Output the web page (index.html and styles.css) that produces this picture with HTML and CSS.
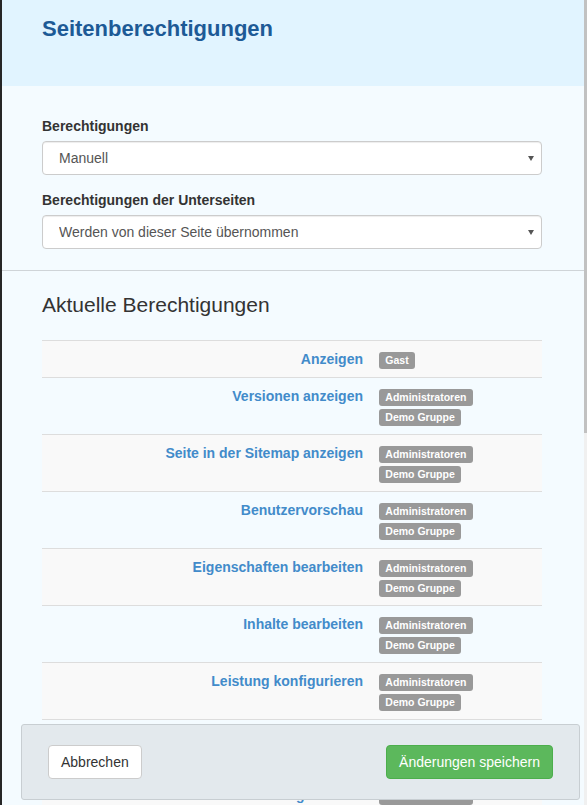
FILE: index.html
```html
<!DOCTYPE html>
<html lang="de">
<head>
<meta charset="utf-8">
<title>Seitenberechtigungen</title>
<link rel="stylesheet" href="styles.css">
</head>
<body>
<div class="page">
  <header class="head">
    <h2 class="title">Seitenberechtigungen</h2>
  </header>

  <section class="settings">
    <div class="group">
      <label class="lbl">Berechtigungen</label>
      <div class="select-wrap"><select class="ctl"><option>Manuell</option></select></div>
    </div>
    <div class="group last">
      <label class="lbl">Berechtigungen der Unterseiten</label>
      <div class="select-wrap"><select class="ctl"><option>Werden von dieser Seite übernommen</option></select></div>
    </div>
  </section>

  <section class="current">
    <h3 class="subtitle">Aktuelle Berechtigungen</h3>
    <table class="perm">
      <tbody>
        <tr><td class="name"><a href="#">Anzeigen</a></td><td class="who"><span class="badge">Gast</span></td></tr>
        <tr><td class="name"><a href="#">Versionen anzeigen</a></td><td class="who"><span class="badge">Administratoren</span><br><span class="badge">Demo Gruppe</span></td></tr>
        <tr><td class="name"><a href="#">Seite in der Sitemap anzeigen</a></td><td class="who"><span class="badge">Administratoren</span><br><span class="badge">Demo Gruppe</span></td></tr>
        <tr><td class="name"><a href="#">Benutzervorschau</a></td><td class="who"><span class="badge">Administratoren</span><br><span class="badge">Demo Gruppe</span></td></tr>
        <tr><td class="name"><a href="#">Eigenschaften bearbeiten</a></td><td class="who"><span class="badge">Administratoren</span><br><span class="badge">Demo Gruppe</span></td></tr>
        <tr><td class="name"><a href="#">Inhalte bearbeiten</a></td><td class="who"><span class="badge">Administratoren</span><br><span class="badge">Demo Gruppe</span></td></tr>
        <tr><td class="name"><a href="#">Leistung konfigurieren</a></td><td class="who"><span class="badge">Administratoren</span><br><span class="badge">Demo Gruppe</span></td></tr>
        <tr><td class="name"><a href="#">Design ändern</a></td><td class="who"><span class="badge">Administratoren</span><br><span class="badge">Demo Gruppe</span></td></tr>
        <tr><td class="name"><a href="#">Seitenvorlage ändern</a></td><td class="who"><span class="badge">Administratoren</span><br><span class="badge">Demo Gruppe</span></td></tr>
        <tr><td class="name"><a href="#">Seitentyp ändern</a></td><td class="who"><span class="badge">Administratoren</span><br><span class="badge">Demo Gruppe</span></td></tr>
        <tr><td class="name"><a href="#">Berechtigungen bearbeiten</a></td><td class="who"><span class="badge">Administratoren</span><br><span class="badge">Demo Gruppe</span></td></tr>
        <tr><td class="name"><a href="#">Seite löschen</a></td><td class="who"><span class="badge">Administratoren</span><br><span class="badge">Demo Gruppe</span></td></tr>
        <tr><td class="name"><a href="#">Versionen löschen</a></td><td class="who"><span class="badge">Administratoren</span><br><span class="badge">Demo Gruppe</span></td></tr>
        <tr><td class="name"><a href="#">Änderungen genehmigen</a></td><td class="who"><span class="badge">Administratoren</span><br><span class="badge">Demo Gruppe</span></td></tr>
        <tr><td class="name"><a href="#">Unterseite hinzufügen</a></td><td class="who"><span class="badge">Administratoren</span><br><span class="badge">Demo Gruppe</span></td></tr>
        <tr><td class="name"><a href="#">Verschieben oder kopieren</a></td><td class="who"><span class="badge">Administratoren</span><br><span class="badge">Demo Gruppe</span></td></tr>
        <tr><td class="name"><a href="#">Gastzugang planen</a></td><td class="who"><span class="badge">Administratoren</span><br><span class="badge">Demo Gruppe</span></td></tr>
        <tr><td class="name"><a href="#">Mehrsprachige Einstellungen</a></td><td class="who"><span class="badge">Administratoren</span><br><span class="badge">Demo Gruppe</span></td></tr>
      </tbody>
    </table>
  </section>
</div>

<div class="scrollbar" aria-hidden="true"><div class="scrollbar-thumb"></div></div>

<footer class="actions">
  <button class="btn btn-default" type="button">Abbrechen</button>
  <button class="btn btn-primary" type="button">Änderungen speichern</button>
</footer>
</body>
</html>
```

FILE: styles.css
```css
html {
  background: #f4fbff;
  scrollbar-width: none;
}

html::-webkit-scrollbar {
  display: none;
}

body {
  margin: 0;
  padding-right: 3px;
  font-family: "Liberation Sans", Arial, Helvetica, sans-serif;
  font-size: 14px;
  line-height: 20px;
  color: #333;
  background: #f4fbff;
  border-left: 2px solid #262626;
}

.page {
  padding-bottom: 151px;
}

.head {
  background: #e1f4ff;
  padding: 17px 40px 45px;
}

.title {
  margin: 0;
  font-size: 22px;
  line-height: 24px;
  font-weight: bold;
  color: #1d5a96;
}

.settings {
  padding: 30px 42px 21px 40px;
  border-bottom: 1px solid #cfd4d8;
}

.group {
  margin-bottom: 15px;
}
.group.last {
  margin-bottom: 0;
}

.lbl {
  display: block;
  font-weight: bold;
  margin-bottom: 5px;
  color: #333;
}

.select-wrap {
  position: relative;
}
.select-wrap::after {
  content: "";
  position: absolute;
  right: 8px;
  top: 15px;
  border-left: 3px solid transparent;
  border-right: 3px solid transparent;
  border-top: 5px solid #555;
}

.ctl {
  -webkit-appearance: none;
  appearance: none;
  display: block;
  width: 100%;
  height: 34px;
  margin: 0;
  padding: 6px 24px 6px 16px;
  font-family: inherit;
  font-size: 14px;
  line-height: 20px;
  color: #555;
  background: #fff;
  border: 1px solid #ccc;
  border-radius: 4px;
  box-shadow: inset 0 1px 1px rgba(0, 0, 0, 0.075);
}

.current {
  padding: 22px 42px 0 40px;
}

.subtitle {
  margin: 0 0 24px;
  font-size: 21px;
  line-height: 23px;
  font-weight: normal;
  color: #333;
}

.perm {
  width: 500px;
  border-collapse: collapse;
  border-spacing: 0;
}

.perm td {
  padding: 8px;
  border-top: 1px solid #dddddd;
  vertical-align: top;
  line-height: 20px;
}

.perm tr:nth-child(odd) td {
  background: #f9f9f9;
}

.perm .name {
  width: 313px;
  text-align: right;
}

.perm .name a {
  color: #428bca;
  font-weight: bold;
  text-decoration: none;
}

.badge {
  display: inline;
  padding: 0.2em 0.6em 0.3em;
  font-size: 10.5px;
  font-weight: bold;
  line-height: 1;
  color: #fff;
  background: #999;
  border-radius: 3px;
  white-space: nowrap;
}

.scrollbar {
  position: fixed;
  top: 0;
  right: 0;
  bottom: 0;
  width: 3px;
  background: #f0f0f0;
}

.scrollbar-thumb {
  height: 433px;
  background: #c1c1c1;
}

.actions {
  position: fixed;
  left: 21px;
  right: 7px;
  bottom: 5px;
  display: flex;
  justify-content: space-between;
  padding: 20px 26px;
  background: #e3e9ed;
  border: 1px solid #c8ced2;
  border-radius: 3px;
}

.btn {
  display: inline-block;
  margin: 0;
  padding: 6px 12px;
  font-family: inherit;
  font-size: 14px;
  line-height: 20px;
  border: 1px solid transparent;
  border-radius: 4px;
  cursor: pointer;
}

.btn-default {
  color: #333;
  background: #fff;
  border-color: #ccc;
}

.btn-primary {
  color: #fff;
  background: #5cb85c;
  border-color: #4cae4c;
}
```
